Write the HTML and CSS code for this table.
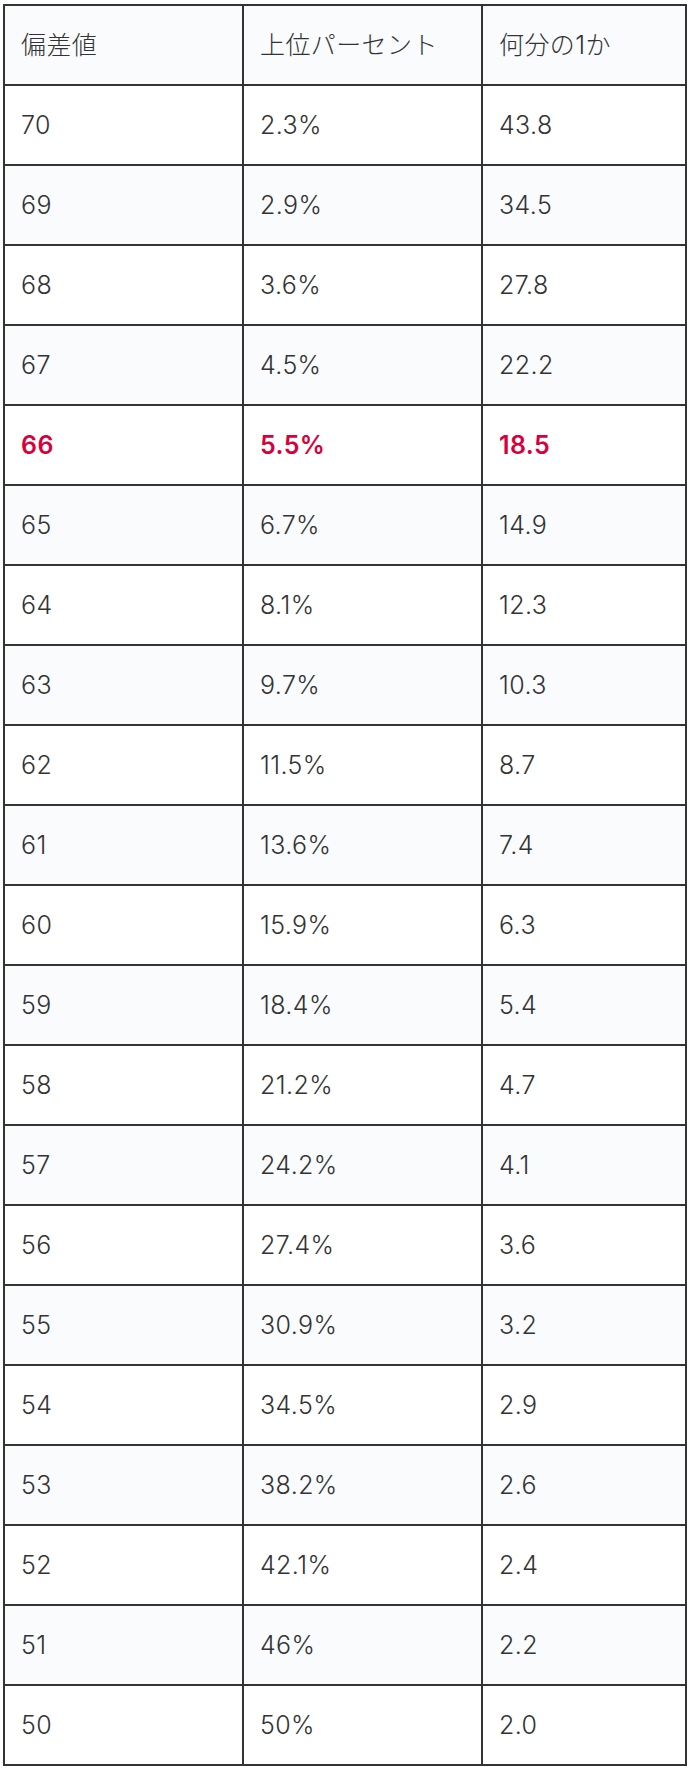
FILE: index.html
```html
<!DOCTYPE html>
<html lang="ja">
<head>
<meta charset="utf-8">
<title>偏差値表</title>
<link rel="stylesheet" href="styles.css">
</head>
<body>
<table class="dev-table">
  <thead>
    <tr><th class="c1">偏差値</th><th class="c2">上位パーセント</th><th class="c3">何分の1か</th></tr>
  </thead>
  <tbody>
    <tr><td>70</td><td>2.3%</td><td>43.8</td></tr>
    <tr><td>69</td><td>2.9%</td><td>34.5</td></tr>
    <tr><td>68</td><td>3.6%</td><td>27.8</td></tr>
    <tr><td>67</td><td>4.5%</td><td>22.2</td></tr>
    <tr class="hl"><td>66</td><td>5.5%</td><td>18.5</td></tr>
    <tr><td>65</td><td>6.7%</td><td>14.9</td></tr>
    <tr><td>64</td><td>8.1%</td><td>12.3</td></tr>
    <tr><td>63</td><td>9.7%</td><td>10.3</td></tr>
    <tr><td>62</td><td>11.5%</td><td>8.7</td></tr>
    <tr><td>61</td><td>13.6%</td><td>7.4</td></tr>
    <tr><td>60</td><td>15.9%</td><td>6.3</td></tr>
    <tr><td>59</td><td>18.4%</td><td>5.4</td></tr>
    <tr><td>58</td><td>21.2%</td><td>4.7</td></tr>
    <tr><td>57</td><td>24.2%</td><td>4.1</td></tr>
    <tr><td>56</td><td>27.4%</td><td>3.6</td></tr>
    <tr><td>55</td><td>30.9%</td><td>3.2</td></tr>
    <tr><td>54</td><td>34.5%</td><td>2.9</td></tr>
    <tr><td>53</td><td>38.2%</td><td>2.6</td></tr>
    <tr><td>52</td><td>42.1%</td><td>2.4</td></tr>
    <tr><td>51</td><td>46%</td><td>2.2</td></tr>
    <tr><td>50</td><td>50%</td><td>2.0</td></tr>
  </tbody>
</table>
</body>
</html>
```

FILE: styles.css
```css
html, body {
  margin: 0;
  padding: 0;
  background: #ffffff;
}
body {
  padding: 4px 0 0 3px;
  font-family: Inter, "Noto Sans CJK JP", sans-serif;
  color: #333333;
}
.dev-table {
  border-collapse: separate;
  border-spacing: 0;
  border-left: 2px solid #333333;
  border-top: 2px solid #333333;
  table-layout: fixed;
  width: 684px;
}
.dev-table th,
.dev-table td {
  height: 80px;
  padding: 0 16px 1px;
  box-sizing: border-box;
  border-right: 2px solid #333333;
  border-bottom: 2px solid #333333;
  font-size: 25px;
  font-weight: 300;
  letter-spacing: 0.4px;
  text-align: left;
  vertical-align: middle;
  line-height: 1.2;
  white-space: nowrap;
}
.dev-table .c1 { width: 239px; }
.dev-table .c2 { width: 239px; }
.dev-table .c3 { width: 204px; }
.dev-table thead tr { background: #f9fbfd; }
.dev-table tbody tr:nth-child(even) { background: #f9fbfd; }
.dev-table tr.hl td {
  color: #d7003a;
  font-weight: 600;
}
```
